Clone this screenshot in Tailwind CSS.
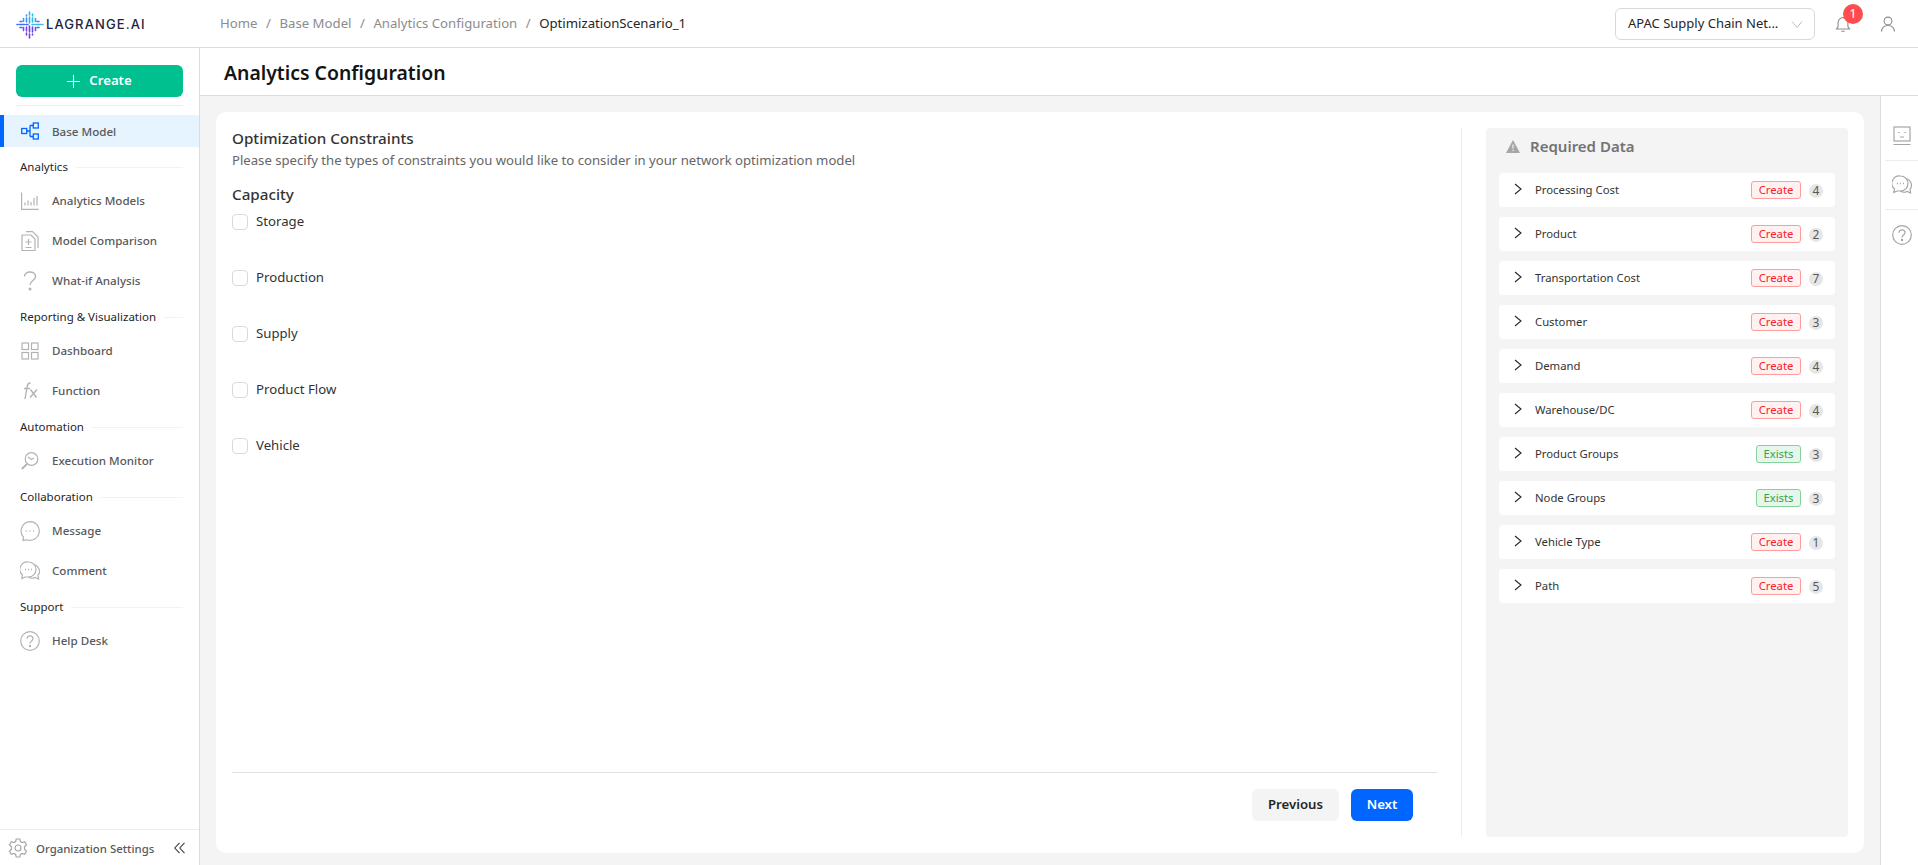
<!DOCTYPE html>
<html lang="en">
<head>
<meta charset="UTF-8">
<title>Analytics Configuration - Lagrange.AI</title>
<script src="https://cdn.jsdelivr.net/npm/@tailwindcss/browser@4"></script>
</head>
<body class="h-screen overflow-hidden flex flex-col bg-white font-['Noto_Sans',sans-serif] text-[#262626]">

<!-- Top bar -->
<header class="h-[48px] shrink-0 flex items-center border-b border-[#dcdcdc] bg-white">
  <div class="w-[200px] shrink-0 flex items-center pl-[16px] h-full">
    <svg class="w-[28px] h-[28px] shrink-0 mt-[2px]" viewBox="0 0 28 28">
      <g stroke-width="1.6" fill="none" stroke-linecap="round">
        <path d="M1 13.5h1M3.5 13.5h5M10 13.5h2" stroke="#3f6cf5"/>
        <path d="M16 13.5h2M19.5 13.5h5M26 13.5h1" stroke="#3fb6ee"/>
        <path d="M13.5 1v3M13.5 6v6" stroke="#25b5f0"/>
        <path d="M13.5 15v6M13.5 23v4" stroke="#6a3df0"/>
        <path d="M10.5 4v1M10.5 7v4" stroke="#3b8df5"/>
        <path d="M16.5 3v2M16.5 7v4" stroke="#25c3e8"/>
        <path d="M10.5 16v4M10.5 22v2" stroke="#7a3df0"/>
        <path d="M16.5 16v5M16.5 23v1" stroke="#5a4df0"/>
        <path d="M7.500 7.500v3M19.500 7.500v3" stroke="#3b9df5"/>
        <path d="M7.500 16.500v3M19.500 16.500v3" stroke="#6a4df0"/>
        <path d="M4 10.500h2M21 10.500h2" stroke="#3b7bf5"/>
        <path d="M4 16.500h2M21 16.500h2" stroke="#5a5df0"/>
      </g>
    </svg>
    <span class="ml-[2px] mt-[1px] text-[13px] leading-none font-medium tracking-[1.1px] text-[#1f2440] font-['Inter',sans-serif]">LAGRANGE.AI</span>
  </div>
  <nav class="flex items-center gap-[8.500px] pl-[20px] text-[13.2px] text-[#8c8c8c]">
    <span>Home</span><span>/</span><span>Base Model</span><span>/</span><span>Analytics Configuration</span><span>/</span><span class="text-[#262626]">OptimizationScenario_1</span>
  </nav>
  <div class="ml-auto flex items-center h-full">
    <div class="w-[200px] h-[32px] border border-[#d9d9d9] rounded-[6px] flex items-center pl-[12px] pr-[11px] text-[13px] text-[#262626]">
      <span class="whitespace-nowrap">APAC Supply Chain Net...</span>
      <svg class="ml-auto w-[12px] h-[12px]" viewBox="0 0 12 12" fill="none" stroke="#bfbfbf" stroke-width="1"><path d="M1 3.500l5 6 5-6"/></svg>
    </div>
    <div class="relative ml-[20px] w-[16px] h-[18px]">
      <svg class="w-[16px] h-[18px]" viewBox="0 0 16 18" fill="none" stroke="#8c8c8c" stroke-width="1.1"><path d="M1.500 14h13l-1.600-2.400V7.500a4.900 4.900 0 0 0-9.800 0v4.100zM6.300 16.200h3.400"/></svg>
      <span class="absolute -top-[11px] left-[8px] w-[20px] h-[20px] rounded-full bg-[#ff4d4f] text-white text-[13px] flex items-center justify-center">1</span>
    </div>
    <svg class="ml-[29px] mr-[22px] w-[16px] h-[16px]" viewBox="0 0 16 16" fill="none" stroke="#8c8c8c" stroke-width="1.1"><circle cx="8" cy="5" r="3.900"/><path d="M1.500 15.500c.3-3.500 2.600-6 6.500-6s6.200 2.500 6.500 6"/></svg>
  </div>
</header>

<div class="flex-1 flex min-h-0">
  <!-- Sidebar -->
  <aside class="w-[200px] shrink-0 border-r border-[#dcdcdc] bg-white flex flex-col">
    <div class="px-[16px] pt-[17px]">
      <button class="w-full h-[32px] rounded-[6px] bg-[#00c08f] text-white text-[13.2px] font-semibold flex items-center justify-center gap-[9px]">
        <svg class="w-[13px] h-[13px]" viewBox="0 0 13 13" stroke="#fff" stroke-width="1.1"><path d="M6.500 0v13M0 6.500h13"/></svg>
        Create
      </button>
      <div class="mt-[8px] border-t border-[#efefef]"></div>
    </div>
    <nav class="mt-[9px] flex-1 text-[11.6px] font-medium text-[#595959]">
      <a class="flex items-center h-[32px] bg-[#e6f4ff] border-l-[4px] border-[#0066ff] pl-[17px]">
        <svg class="w-[18px] h-[18px] shrink-0" viewBox="0 0 18 18" fill="none" stroke="#0066ff" stroke-width="1.3"><rect x="0.700" y="6.500" width="5" height="5"/><rect x="12.300" y="1" width="5" height="5"/><rect x="12.300" y="12" width="5" height="5"/><path d="M5.700 9h3.300M9 3.500h3.300M9 14.500h3.300M9 3.500v11"/></svg>
        <span class="ml-[13px] pt-[1px]">Base Model</span>
      </a>
      <div class="flex items-center gap-[8px] h-[20px] mt-[10px] pl-[20px] pr-[16px] text-[11.5px] font-normal text-[#262626]"><span>Analytics</span><span class="flex-1 border-t border-[#f2f2f2]"></span></div>
      <a class="flex items-center h-[40px] mt-[4px] pl-[21px]">
        <svg class="w-[18px] h-[18px] shrink-0" viewBox="0 0 18 18" fill="none" stroke="#b3b3b3" stroke-width="1.2"><path d="M.6.500v16.900h17M4 13.500v-3M7 13.500v-5M10 13.500v-3.500M13 13.500V6M16 13.500V4"/></svg>
        <span class="ml-[13px]">Analytics Models</span>
      </a>
      <a class="flex items-center h-[40px] pl-[21px]">
        <svg class="w-[18px] h-[20px] shrink-0" viewBox="0 0 18 20" fill="none" stroke="#b3b3b3" stroke-width="1.2"><path d="M1 4h9l4 4v11.500H1zM5 .6h6.500l5.500 5.500v11M7.500 8v6M4.500 11h6M4.500 16.500h6"/></svg>
        <span class="ml-[13px]">Model Comparison</span>
      </a>
      <a class="flex items-center h-[40px] pl-[21px]">
        <svg class="w-[18px] h-[20px] shrink-0" viewBox="0 0 18 20" fill="none" stroke="#b3b3b3" stroke-width="1.4"><path d="M3.500 5.500c0-6 11-6 11 0 0 4-5.500 4-5.500 8.500"/><circle cx="9" cy="18" r=".8" fill="#b3b3b3"/></svg>
        <span class="ml-[13px]">What-if Analysis</span>
      </a>
      <div class="flex items-center gap-[8px] h-[20px] mt-[6px] pl-[20px] pr-[16px] text-[11.5px] font-normal text-[#262626]"><span>Reporting &amp; Visualization</span><span class="flex-1 border-t border-[#f2f2f2]"></span></div>
      <a class="flex items-center h-[40px] mt-[4px] pl-[21px]">
        <svg class="w-[18px] h-[18px] shrink-0" viewBox="0 0 18 18" fill="none" stroke="#b3b3b3" stroke-width="1.2"><rect x="1" y="1" width="6.500" height="6.500"/><rect x="10.500" y="1" width="6.500" height="6.500"/><rect x="1" y="10.500" width="6.500" height="6.500"/><rect x="10.500" y="10.500" width="6.500" height="6.500"/></svg>
        <span class="ml-[13px]">Dashboard</span>
      </a>
      <a class="flex items-center h-[40px] pl-[21px]">
        <svg class="w-[18px] h-[18px] shrink-0" viewBox="0 0 18 18" fill="none" stroke="#b3b3b3" stroke-width="1.4"><path d="M9.500 1C7 .8 6.500 2.500 6.200 4.500L4 17M3 6.500h6M9.500 7.500l6 8M16 7.500l-7 8"/></svg>
        <span class="ml-[13px]">Function</span>
      </a>
      <div class="flex items-center gap-[8px] h-[20px] mt-[6px] pl-[20px] pr-[16px] text-[11.5px] font-normal text-[#262626]"><span>Automation</span><span class="flex-1 border-t border-[#f2f2f2]"></span></div>
      <a class="flex items-center h-[40px] mt-[4px] pl-[21px]">
        <svg class="w-[18px] h-[18px] shrink-0" viewBox="0 0 18 18" fill="none" stroke="#b3b3b3" stroke-width="1.2"><circle cx="10.500" cy="7" r="6.300"/><path d="M6 12L.8 17" stroke-width="1.800"/><path d="M7 5l3.500 2.500L13 6"/></svg>
        <span class="ml-[13px]">Execution Monitor</span>
      </a>
      <div class="flex items-center gap-[8px] h-[20px] mt-[6px] pl-[20px] pr-[16px] text-[11.5px] font-normal text-[#262626]"><span>Collaboration</span><span class="flex-1 border-t border-[#f2f2f2]"></span></div>
      <a class="flex items-center h-[40px] mt-[4px] pl-[20px]">
        <svg class="w-[20px] h-[20px] shrink-0" viewBox="0 0 20 20" fill="none" stroke="#b3b3b3" stroke-width="1.2"><path d="M10 .7a9.300 9.300 0 1 1-3 18.100l-4 .6.500-3.200A9.300 9.300 0 0 1 10 .7z"/><path d="M5.800 10h1M9.500 10h1M13.200 10h1" stroke-width="1.400"/></svg>
        <span class="ml-[12px]">Message</span>
      </a>
      <a class="flex items-center h-[40px] pl-[20px]">
        <svg class="w-[20px] h-[20px] shrink-0" viewBox="0 0 20 20" fill="none" stroke="#b3b3b3" stroke-width="1.2"><path d="M8.500 1a7.500 7.500 0 0 1 0 15H5l-3.200 1.500.6-3.500A7.500 7.500 0 0 1 8.500 1z"/><path d="M14.500 3.500c6 3 5.800 8.500 3.500 10.500l.6 4-3.600-1.500c-2 1-4.500 1-6.500-.5"/><path d="M5 8.500h1M8 8.500h1M11 8.500h1" stroke-width="1.300"/></svg>
        <span class="ml-[12px]">Comment</span>
      </a>
      <div class="flex items-center gap-[8px] h-[20px] mt-[6px] pl-[20px] pr-[16px] text-[11.5px] font-normal text-[#262626]"><span>Support</span><span class="flex-1 border-t border-[#f2f2f2]"></span></div>
      <a class="flex items-center h-[40px] mt-[4px] pl-[20px]">
        <svg class="w-[20px] h-[20px] shrink-0" viewBox="0 0 20 20" fill="none" stroke="#b3b3b3" stroke-width="1.2"><circle cx="10" cy="10" r="9.300"/><path d="M7 7.800c0-4 6-4 6 0 0 2.200-3 2.200-3 4.700"/><circle cx="10" cy="15" r=".6" fill="#b3b3b3"/></svg>
        <span class="ml-[12px]">Help Desk</span>
      </a>
    </nav>
    <div class="h-[36px] border-t border-[#ececec] flex items-center pl-[8px] pr-[14px] text-[11.4px] font-medium text-[#595959]">
      <svg class="w-[20px] h-[20px] shrink-0" viewBox="0 0 20 20" fill="none" stroke="#a6a6a6" stroke-width="1.2"><path d="M8.200 1h3.600l.6 2.600 1.700 1 2.600-.8 1.800 3.100-2 1.800v2.600l2 1.800-1.800 3.100-2.600-.8-1.700 1-.6 2.600H8.200l-.6-2.600-1.700-1-2.600.8-1.800-3.100 2-1.800V8.700l-2-1.800 1.800-3.100 2.600.8 1.700-1z"/><circle cx="10" cy="10" r="3"/></svg>
      <span class="ml-[8px] pt-[2px] whitespace-nowrap">Organization Settings</span>
      <svg class="ml-auto w-[11px] h-[12px]" viewBox="0 0 11 12" fill="none" stroke="#404040" stroke-width="1.1"><path d="M5.500 .8L.8 6l4.700 5.200M10.500 .8L5.800 6l4.700 5.200"/></svg>
    </div>
  </aside>

  <!-- Page -->
  <div class="flex-1 min-w-0 flex flex-col bg-[#f4f4f4]">
    <div class="h-[48px] shrink-0 bg-white border-b border-[#dcdcdc] flex items-center pl-[24px] pt-[2px]">
      <h1 class="text-[19.4px] font-semibold text-[#141414]">Analytics Configuration</h1>
    </div>
    <div class="flex-1 min-h-0 flex">
      <main class="flex-1 min-w-0 pl-[16px] pr-[16px] pt-[16px] pb-[12px] flex">
        <div class="flex-1 min-w-0 bg-white rounded-[10px] p-[16px] flex">
          <!-- Form column -->
          <section class="w-[1205px] shrink-0 flex flex-col">
            <h2 class="text-[15.2px] leading-[20px] font-medium text-[#333]">Optimization Constraints</h2>
            <p class="text-[13.15px] leading-[20px] mt-[2px] text-[#666]">Please specify the types of constraints you would like to consider in your network optimization model</p>
            <h3 class="mt-[13px] text-[15.2px] leading-[22px] font-medium text-[#333]">Capacity</h3>
            <div class="mt-[9px] flex flex-col gap-[40px] text-[13.2px] text-[#333]">
              <label class="flex items-center h-[16px]"><span class="w-[16px] h-[16px] rounded-[4px] border border-[#d9d9d9] bg-white"></span><span class="ml-[8px]">Storage</span></label>
              <label class="flex items-center h-[16px]"><span class="w-[16px] h-[16px] rounded-[4px] border border-[#d9d9d9] bg-white"></span><span class="ml-[8px]">Production</span></label>
              <label class="flex items-center h-[16px]"><span class="w-[16px] h-[16px] rounded-[4px] border border-[#d9d9d9] bg-white"></span><span class="ml-[8px]">Supply</span></label>
              <label class="flex items-center h-[16px]"><span class="w-[16px] h-[16px] rounded-[4px] border border-[#d9d9d9] bg-white"></span><span class="ml-[8px]">Product Flow</span></label>
              <label class="flex items-center h-[16px]"><span class="w-[16px] h-[16px] rounded-[4px] border border-[#d9d9d9] bg-white"></span><span class="ml-[8px]">Vehicle</span></label>
            </div>
            <div class="mt-auto border-t border-[#e0e0e0] pt-[16px] pr-[24px] pb-[16px] flex justify-end gap-[12px]">
              <button class="w-[87px] h-[32px] rounded-[6px] bg-[#f4f4f4] text-[13.2px] font-semibold text-[#262626]">Previous</button>
              <button class="w-[62px] h-[32px] rounded-[6px] bg-[#0066ff] text-[13.2px] font-semibold text-white">Next</button>
            </div>
          </section>
          <div class="ml-[24px] border-l border-[#ececec]"></div>
          <!-- Required data -->
          <section class="ml-[24px] w-[362px] shrink-0 bg-[#f4f4f4] rounded-[4px] px-[13px] pt-[8px]">
            <div class="flex items-center h-[20px] pl-[7px] text-[15px] font-semibold text-[#737373]">
              <svg class="w-[14px] h-[13px]" viewBox="0 0 14 13"><path d="M7 0l7 13H0z" fill="#a6a6a6"/><path d="M7 4.500v4M7 9.800v1.200" stroke="#f4f4f4" stroke-width="1.200"/></svg>
              <span class="ml-[10px]">Required Data</span>
            </div>
            <ul class="mt-[17px] flex flex-col gap-[10px] text-[11.3px] text-[#333]">
              <li class="h-[34px] bg-white rounded-[4px] flex items-center pl-[15px] pr-[12px]">
                <svg class="w-[8px] h-[12px] shrink-0 -mt-[2px]" viewBox="0 0 8 12" fill="none" stroke="#262626" stroke-width="1.1"><path d="M1 1l6 5-6 5"/></svg>
                <span class="ml-[13px]">Processing Cost</span>
                <span class="ml-auto h-[18px] w-[50px] rounded-[3px] border border-[#ff9c9c] bg-[#fff1f0] text-[#f5222d] flex items-center justify-center">Create</span>
                <span class="ml-[8px] mt-[2px] w-[14px] h-[14px] rounded-full bg-[#e6e6e6] text-[#595959] text-[12px] flex items-center justify-center">4</span>
              </li>
              <li class="h-[34px] bg-white rounded-[4px] flex items-center pl-[15px] pr-[12px]">
                <svg class="w-[8px] h-[12px] shrink-0 -mt-[2px]" viewBox="0 0 8 12" fill="none" stroke="#262626" stroke-width="1.1"><path d="M1 1l6 5-6 5"/></svg>
                <span class="ml-[13px]">Product</span>
                <span class="ml-auto h-[18px] w-[50px] rounded-[3px] border border-[#ff9c9c] bg-[#fff1f0] text-[#f5222d] flex items-center justify-center">Create</span>
                <span class="ml-[8px] mt-[2px] w-[14px] h-[14px] rounded-full bg-[#e6e6e6] text-[#595959] text-[12px] flex items-center justify-center">2</span>
              </li>
              <li class="h-[34px] bg-white rounded-[4px] flex items-center pl-[15px] pr-[12px]">
                <svg class="w-[8px] h-[12px] shrink-0 -mt-[2px]" viewBox="0 0 8 12" fill="none" stroke="#262626" stroke-width="1.1"><path d="M1 1l6 5-6 5"/></svg>
                <span class="ml-[13px]">Transportation Cost</span>
                <span class="ml-auto h-[18px] w-[50px] rounded-[3px] border border-[#ff9c9c] bg-[#fff1f0] text-[#f5222d] flex items-center justify-center">Create</span>
                <span class="ml-[8px] mt-[2px] w-[14px] h-[14px] rounded-full bg-[#e6e6e6] text-[#595959] text-[12px] flex items-center justify-center">7</span>
              </li>
              <li class="h-[34px] bg-white rounded-[4px] flex items-center pl-[15px] pr-[12px]">
                <svg class="w-[8px] h-[12px] shrink-0 -mt-[2px]" viewBox="0 0 8 12" fill="none" stroke="#262626" stroke-width="1.1"><path d="M1 1l6 5-6 5"/></svg>
                <span class="ml-[13px]">Customer</span>
                <span class="ml-auto h-[18px] w-[50px] rounded-[3px] border border-[#ff9c9c] bg-[#fff1f0] text-[#f5222d] flex items-center justify-center">Create</span>
                <span class="ml-[8px] mt-[2px] w-[14px] h-[14px] rounded-full bg-[#e6e6e6] text-[#595959] text-[12px] flex items-center justify-center">3</span>
              </li>
              <li class="h-[34px] bg-white rounded-[4px] flex items-center pl-[15px] pr-[12px]">
                <svg class="w-[8px] h-[12px] shrink-0 -mt-[2px]" viewBox="0 0 8 12" fill="none" stroke="#262626" stroke-width="1.1"><path d="M1 1l6 5-6 5"/></svg>
                <span class="ml-[13px]">Demand</span>
                <span class="ml-auto h-[18px] w-[50px] rounded-[3px] border border-[#ff9c9c] bg-[#fff1f0] text-[#f5222d] flex items-center justify-center">Create</span>
                <span class="ml-[8px] mt-[2px] w-[14px] h-[14px] rounded-full bg-[#e6e6e6] text-[#595959] text-[12px] flex items-center justify-center">4</span>
              </li>
              <li class="h-[34px] bg-white rounded-[4px] flex items-center pl-[15px] pr-[12px]">
                <svg class="w-[8px] h-[12px] shrink-0 -mt-[2px]" viewBox="0 0 8 12" fill="none" stroke="#262626" stroke-width="1.1"><path d="M1 1l6 5-6 5"/></svg>
                <span class="ml-[13px]">Warehouse/DC</span>
                <span class="ml-auto h-[18px] w-[50px] rounded-[3px] border border-[#ff9c9c] bg-[#fff1f0] text-[#f5222d] flex items-center justify-center">Create</span>
                <span class="ml-[8px] mt-[2px] w-[14px] h-[14px] rounded-full bg-[#e6e6e6] text-[#595959] text-[12px] flex items-center justify-center">4</span>
              </li>
              <li class="h-[34px] bg-white rounded-[4px] flex items-center pl-[15px] pr-[12px]">
                <svg class="w-[8px] h-[12px] shrink-0 -mt-[2px]" viewBox="0 0 8 12" fill="none" stroke="#262626" stroke-width="1.1"><path d="M1 1l6 5-6 5"/></svg>
                <span class="ml-[13px]">Product Groups</span>
                <span class="ml-auto h-[18px] w-[45px] rounded-[3px] border border-[#85d39b] bg-[#e6f6ea] text-[#2ea44f] flex items-center justify-center">Exists</span>
                <span class="ml-[8px] mt-[2px] w-[14px] h-[14px] rounded-full bg-[#e6e6e6] text-[#595959] text-[12px] flex items-center justify-center">3</span>
              </li>
              <li class="h-[34px] bg-white rounded-[4px] flex items-center pl-[15px] pr-[12px]">
                <svg class="w-[8px] h-[12px] shrink-0 -mt-[2px]" viewBox="0 0 8 12" fill="none" stroke="#262626" stroke-width="1.1"><path d="M1 1l6 5-6 5"/></svg>
                <span class="ml-[13px]">Node Groups</span>
                <span class="ml-auto h-[18px] w-[45px] rounded-[3px] border border-[#85d39b] bg-[#e6f6ea] text-[#2ea44f] flex items-center justify-center">Exists</span>
                <span class="ml-[8px] mt-[2px] w-[14px] h-[14px] rounded-full bg-[#e6e6e6] text-[#595959] text-[12px] flex items-center justify-center">3</span>
              </li>
              <li class="h-[34px] bg-white rounded-[4px] flex items-center pl-[15px] pr-[12px]">
                <svg class="w-[8px] h-[12px] shrink-0 -mt-[2px]" viewBox="0 0 8 12" fill="none" stroke="#262626" stroke-width="1.1"><path d="M1 1l6 5-6 5"/></svg>
                <span class="ml-[13px]">Vehicle Type</span>
                <span class="ml-auto h-[18px] w-[50px] rounded-[3px] border border-[#ff9c9c] bg-[#fff1f0] text-[#f5222d] flex items-center justify-center">Create</span>
                <span class="ml-[8px] mt-[2px] w-[14px] h-[14px] rounded-full bg-[#e6e6e6] text-[#595959] text-[12px] flex items-center justify-center">1</span>
              </li>
              <li class="h-[34px] bg-white rounded-[4px] flex items-center pl-[15px] pr-[12px]">
                <svg class="w-[8px] h-[12px] shrink-0 -mt-[2px]" viewBox="0 0 8 12" fill="none" stroke="#262626" stroke-width="1.1"><path d="M1 1l6 5-6 5"/></svg>
                <span class="ml-[13px]">Path</span>
                <span class="ml-auto h-[18px] w-[50px] rounded-[3px] border border-[#ff9c9c] bg-[#fff1f0] text-[#f5222d] flex items-center justify-center">Create</span>
                <span class="ml-[8px] mt-[2px] w-[14px] h-[14px] rounded-full bg-[#e6e6e6] text-[#595959] text-[12px] flex items-center justify-center">5</span>
              </li>
            </ul>
          </section>
        </div>
      </main>
      <!-- Right rail -->
      <aside class="w-[38px] shrink-0 bg-white border-l border-[#dcdcdc] pl-[4px] flex flex-col items-stretch">
        <div class="h-[65px] flex items-center justify-center border-b border-[#ececec] pt-[15px]">
          <svg class="w-[18px] h-[20px]" viewBox="0 0 18 20" fill="none" stroke="#a6a6a6" stroke-width="1.2"><rect x="1" y="1" width="16" height="14"/><path d="M5 6.500h1.500M11.500 6.500H13M7 11h4M.5 18.500h17" /></svg>
        </div>
        <div class="h-[49px] flex items-center justify-center border-b border-[#ececec]">
          <svg class="w-[20px] h-[20px]" viewBox="0 0 20 20" fill="none" stroke="#a6a6a6" stroke-width="1.2"><path d="M8.500 1a7.500 7.500 0 0 1 0 15H5l-3.200 1.500.6-3.500A7.500 7.500 0 0 1 8.500 1z"/><path d="M14.500 3.500c6 3 5.800 8.500 3.500 10.500l.6 4-3.600-1.500c-2 1-4.500 1-6.500-.5"/><path d="M5 8.500h1M8 8.500h1M11 8.500h1" stroke-width="1.300"/></svg>
        </div>
        <div class="h-[49px] flex items-center justify-center">
          <svg class="w-[20px] h-[20px]" viewBox="0 0 20 20" fill="none" stroke="#a6a6a6" stroke-width="1.2"><circle cx="10" cy="10" r="9.300"/><path d="M7 7.800c0-4 6-4 6 0 0 2.200-3 2.200-3 4.700"/><circle cx="10" cy="15" r=".6" fill="#a6a6a6"/></svg>
        </div>
      </aside>
    </div>
  </div>
</div>
</body>
</html>
